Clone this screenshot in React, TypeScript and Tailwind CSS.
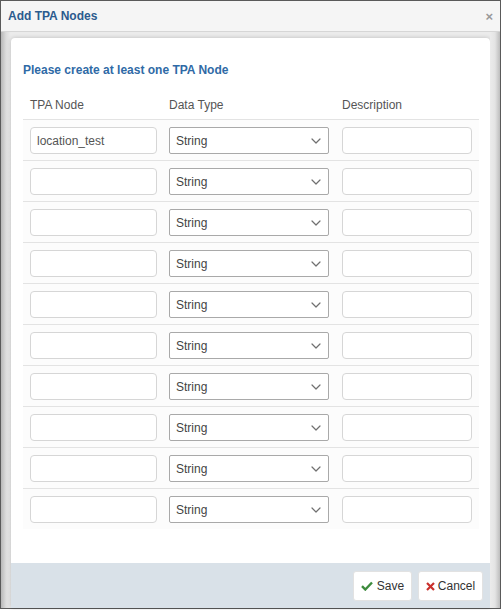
import { ChevronDown } from 'lucide-react';

const ROWS = ['location_test', '', '', '', '', '', '', '', '', ''];

const FONT = { fontFamily: '"Liberation Sans", Arial, sans-serif' };

function NodeRow({ value }: { value: string }) {
  return (
    <div className="flex items-center border-t border-[#e3e3e3] pt-[7px] pb-[6px]">
      <div className="w-[146px] pl-[7px]">
        <input
          type="text"
          defaultValue={value}
          className="h-[27px] w-[127px] rounded-[4px] border border-[#d6d6d6] bg-white px-[6px] text-[12px] text-[#555] outline-none"
        />
      </div>
      <div className="w-[173px]">
        <div className="flex h-[27px] w-[160px] items-center justify-between rounded-[2px] border border-[#a9a9a9] bg-white pl-[6px] pr-[4px] text-[12px] text-[#444]">
          <span>String</span>
          <ChevronDown size={16} strokeWidth={1.8} className="text-[#707070]" />
        </div>
      </div>
      <div>
        <input
          type="text"
          className="h-[27px] w-[130px] rounded-[4px] border border-[#d6d6d6] bg-white px-[6px] text-[12px] outline-none"
        />
      </div>
    </div>
  );
}

export default function App() {
  return (
    <div style={FONT} className="h-[610px] w-[502px] bg-white">
      <div className="flex h-[609px] w-[501px] flex-col border border-[#5a5a5a] bg-[#ebebeb]">
        <div className="flex h-[31px] shrink-0 items-center justify-between border-b border-[#d6d6d6] bg-[#f5f5f5] pl-[7px] pr-[7px]">
          <span className="text-[12px] font-bold text-[#2b5b8e]">Add TPA Nodes</span>
          <span className="text-[13px] font-bold leading-none text-[#999]">×</span>
        </div>
        <div className="flex flex-1">
          <div className="w-[10px] bg-gradient-to-r from-[#b8b8b8] via-[#dcdcdc] to-[#ececec]" />
          <div className="mt-[6px] flex w-[479px] flex-col rounded-t-[4px] bg-white shadow-[0_0_4px_rgba(0,0,0,0.2)]">
            <div className="flex-1 px-[12px] pt-[25px]">
              <div className="text-[12px] font-bold leading-[14px] text-[#2f6aa6]">
                Please create at least one TPA Node
              </div>
              <div className="mt-[20px] flex pb-[6px] text-[12px] leading-[16px] text-[#555]">
                <div className="w-[146px] pl-[7px]">TPA Node</div>
                <div className="w-[173px]">Data Type</div>
                <div>Description</div>
              </div>
              <div className="w-[456px] bg-[#fcfcfc]">
                {ROWS.map((value, index) => (
                  <NodeRow key={index} value={value} />
                ))}
              </div>
            </div>
            <div className="flex h-[45px] items-center justify-end gap-[6px] bg-[#d9e1e8] pr-[7px] pt-[1px]">
              <button
                type="button"
                className="flex h-[30px] w-[59px] items-center justify-center gap-[4px] rounded-[3px] border border-[#e2e2e2] bg-white text-[12px] text-[#333]"
              >
                <svg width="12" height="10" viewBox="0 0 12 10">
                  <path d="M1 5.2 L4.3 8.5 L11 1.5" fill="none" stroke="#3d8b3d" strokeWidth="2.4" />
                </svg>
                Save
              </button>
              <button
                type="button"
                className="flex h-[30px] w-[65px] items-center justify-center gap-[3px] rounded-[3px] border border-[#e2e2e2] bg-white text-[12px] text-[#333]"
              >
                <svg width="9" height="9" viewBox="0 0 9 9">
                  <path d="M1 1 L8 8 M8 1 L1 8" fill="none" stroke="#c9302c" strokeWidth="2.2" />
                </svg>
                Cancel
              </button>
            </div>
          </div>
          <div className="w-[10px] bg-gradient-to-r from-[#ececec] via-[#e4e4e4] to-[#bdbdbd]" />
        </div>
      </div>
    </div>
  );
}
